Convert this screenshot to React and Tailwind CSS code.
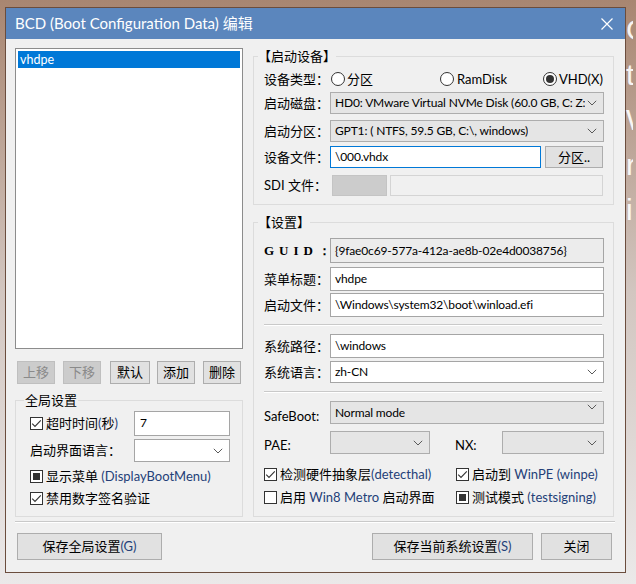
import React from 'react';

const Chevron = () => (
  <svg width="10" height="6" viewBox="0 0 10 6" className="shrink-0">
    <path d="M0.8 0.8 L5 5 L9.2 0.8" fill="none" stroke="#5a5a5a" strokeWidth="1" />
  </svg>
);

const CheckBox = ({ state }) => (
  <span className="w-[13px] h-[13px] border border-[#333333] bg-white flex items-center justify-center shrink-0">
    {state === 'on' && (
      <svg width="11" height="11" viewBox="0 0 11 11">
        <path d="M1.2 5.6 L4 8.4 L9.8 2.4" fill="none" stroke="#333333" strokeWidth="1.1" />
      </svg>
    )}
    {state === 'mixed' && <span className="w-[7px] h-[7px] bg-[#333333]" />}
  </span>
);

const Radio = ({ on }) => (
  <span className="w-[14px] h-[14px] rounded-full border border-[#333333] bg-white flex items-center justify-center shrink-0">
    {on && <span className="w-[8px] h-[8px] rounded-full bg-[#333333]" />}
  </span>
);

const Label = ({ children, className = '' }) => (
  <span className={`text-[13px] text-black leading-none whitespace-nowrap ${className}`}>{children}</span>
);

const TextBox = ({ value, className = '', gray = false, focus = false }) => (
  <div
    className={`border flex items-center pl-[4px] text-[12px] tracking-[-0.15px] text-black whitespace-nowrap overflow-hidden ${
      focus ? 'border-[#0078d7]' : 'border-[#a5a5a5]'
    } ${gray ? 'bg-[#ececec]' : 'bg-white'} ${className}`}
  >
    {value}
  </div>
);

const Combo = ({ value = '', className = '', white = false }) => (
  <div
    className={`border flex items-center justify-between pl-[4px] pr-[6px] text-[12px] tracking-[-0.15px] text-black whitespace-nowrap overflow-hidden ${
      white ? 'bg-white border-[#a5a5a5]' : 'bg-[#e5e5e5] border-[#adadad]'
    } ${className}`}
  >
    <span className="overflow-hidden">{value}</span>
    <Chevron />
  </div>
);

const Btn = ({ children, className = '', disabled = false }) => (
  <div
    className={`border flex items-center justify-center text-[13px] leading-none ${
      disabled ? 'bg-[#cccccc] border-[#bfbfbf] text-[#8a8a8a]' : 'bg-[#e1e1e1] border-[#adadad] text-black'
    } ${className}`}
  >
    {children}
  </div>
);

const Sep = ({ className = '' }) => (
  <div className={`h-[2px] border-t border-[#c9c9c9] bg-white ${className}`} />
);

const Row = ({ label, children, className = '' }) => (
  <div className={`flex items-center ${className}`}>
    <Label className="w-[66px]">{label}</Label>
    {children}
  </div>
);

const Blue = ({ children }) => <span className="text-[#243f78]">{children}</span>;

export default function App() {
  return (
    <div className="w-[636px] h-[584px] overflow-hidden flex bg-gradient-to-b from-[#a88671] via-[#d2c6c0] to-[#ebe9e9] pt-[7px] pl-[5px] font-['Lato','Noto_Sans_CJK_SC',sans-serif]">
      <div className="w-[621px] h-[566px] shrink-0 border border-[#6b4d3d] bg-[#f0f0f0] flex flex-col">
        {/* title bar */}
        <div className="h-[31px] shrink-0 bg-[#5b86bd] flex items-center justify-between pl-[9px] pr-[12px]">
          <span className="text-white text-[15px] leading-none">BCD (Boot Configuration Data) 编辑</span>
          <svg width="12" height="12" viewBox="0 0 12 12">
            <path d="M0.5 0.5 L11.5 11.5 M11.5 0.5 L0.5 11.5" stroke="#ffffff" strokeWidth="1.2" />
          </svg>
        </div>

        <div className="flex pl-[9px] pt-[9px]">
          {/* left column */}
          <div className="w-[228px] flex flex-col">
            <div className="h-[301px] border border-[#8c8c8c] bg-white p-[2px]">
              <div className="h-[17px] bg-[#0078d7] text-white text-[12.5px] leading-[17px] pl-[2px]">vhdpe</div>
            </div>
            <div className="flex mt-[12px] h-[23px]">
              <Btn disabled className="ml-[2px] w-[38px]">上移</Btn>
              <Btn disabled className="ml-[8px] w-[38px]">下移</Btn>
              <Btn className="ml-[9px] w-[40px]">默认</Btn>
              <Btn className="ml-[7px] w-[38px]">添加</Btn>
              <Btn className="ml-[8px] w-[38px]">删除</Btn>
            </div>
            <fieldset className="mt-[8px] h-[125px] border border-[#dcdcdc] pl-[14px] pr-[12px]">
              <legend className="-ml-[6px] px-[1px] text-[13px] leading-[16px] text-black">全局设置</legend>
              <div className="flex items-center justify-between mt-[3px]">
                <div className="flex items-center gap-[3px]">
                  <CheckBox state="on" />
                  <Label>
                    超时时间<Blue>(</Blue>秒<Blue>)</Blue>
                  </Label>
                </div>
                <TextBox value="7" className="w-[96px] h-[25px] items-start pt-[2px] pl-[5px]" />
              </div>
              <div className="flex items-center justify-between mt-[3px]">
                <Label>启动界面语言：</Label>
                <Combo white className="w-[96px] h-[23px]" />
              </div>
              <div className="flex items-center gap-[3px] mt-[8px]">
                <CheckBox state="mixed" />
                <Label>
                  显示菜单 <Blue>(DisplayBootMenu)</Blue>
                </Label>
              </div>
              <div className="flex items-center gap-[3px] mt-[9px]">
                <CheckBox state="on" />
                <Label>禁用数字签名验证</Label>
              </div>
            </fieldset>
          </div>

          {/* right column */}
          <div className="w-[361px] ml-[10px] flex flex-col">
            <fieldset className="h-[157px] border border-[#dcdcdc] pl-[10px] pr-[9px]">
              <legend className="-ml-[6px] text-[13px] leading-[16px] text-black">【启动设备】</legend>
              <div className="flex items-center mt-[6px] h-[18px]">
                <Label className="w-[67px]">设备类型：</Label>
                <div className="flex items-center gap-[2px] w-[109px]">
                  <Radio />
                  <Label>分区</Label>
                </div>
                <div className="flex items-center gap-[3px] w-[103px]">
                  <Radio />
                  <Label className="text-[12.5px]">RamDisk</Label>
                </div>
                <div className="flex items-center gap-[2px]">
                  <Radio on />
                  <Label className="text-[12.5px]">VHD(X)</Label>
                </div>
              </div>
              <Row label="启动磁盘：" className="mt-[4px]">
                <Combo className="w-[274px] h-[22px]" value="HD0: VMware Virtual NVMe Disk (60.0 GB, C: Z:" />
              </Row>
              <Row label="启动分区：" className="mt-[6px]">
                <Combo className="w-[274px] h-[22px]" value="GPT1: ( NTFS,  59.5 GB, C:\, windows)" />
              </Row>
              <Row label="设备文件：" className="mt-[4px]">
                <TextBox focus value="\000.vhdx" className="w-[211px] h-[22px]" />
                <Btn className="ml-[4px] w-[58px] h-[22px]">分区..</Btn>
              </Row>
              <div className="flex items-center mt-[6px] h-[22px]">
                <Label className="w-[68px] text-[12.5px]">SDI 文件：</Label>
                <div className="w-[55px] h-[21px] bg-[#cccccc] border border-[#c4c4c4]" />
                <div className="ml-[3px] w-[213px] h-[21px] bg-[#f0f0f0] border border-[#d4d4d4]" />
              </div>
            </fieldset>

            <fieldset className="mt-[9px] h-[303px] border border-[#dcdcdc] pl-[10px] pr-[9px]">
              <legend className="-ml-[6px] text-[13px] leading-[16px] text-black">【设置】</legend>
              <Row label={<span className="font-['Liberation_Serif',serif] font-bold tracking-[5px]">GUID：</span>} className="mt-[8px]">
                <TextBox gray value="{9fae0c69-577a-412a-ae8b-02e4d0038756}" className="w-[274px] h-[25px] text-[#333333]" />
              </Row>
              <Row label="菜单标题：" className="mt-[4px]">
                <TextBox value="vhdpe" className="w-[274px] h-[24px]" />
              </Row>
              <Row label="启动文件：" className="mt-[2px]">
                <TextBox value="\Windows\system32\boot\winload.efi" className="w-[274px] h-[24px]" />
              </Row>
              <Sep className="mt-[7px] w-[338px]" />
              <Row label="系统路径：" className="mt-[8px]">
                <TextBox value="\windows" className="w-[274px] h-[24px]" />
              </Row>
              <Row label="系统语言：" className="mt-[3px]">
                <Combo white value="zh-CN" className="w-[274px] h-[22px]" />
              </Row>
              <Sep className="mt-[8px] w-[338px]" />
              <div className="flex items-end mt-[8px]">
                <Label className="w-[66px] text-[12.5px] pb-[1px]">SafeBoot:</Label>
                <Combo value="Normal mode" className="w-[274px] h-[23px] items-start pt-[2px]" />
              </div>
              <div className="flex items-end mt-[7px]">
                <Label className="w-[66px] text-[12.5px] pb-[2px]">PAE:</Label>
                <Combo className="w-[100px] h-[23px]" />
                <Label className="ml-[25px] w-[47px] text-[12.5px] pb-[2px]">NX:</Label>
                <Combo className="w-[102px] h-[23px]" />
              </div>
              <div className="flex items-center mt-[14px]">
                <div className="flex items-center gap-[3px] w-[192px]">
                  <CheckBox state="on" />
                  <Label>
                    检测硬件抽象层<Blue>(detecthal)</Blue>
                  </Label>
                </div>
                <div className="flex items-center gap-[3px]">
                  <CheckBox state="on" />
                  <Label>
                    启动到 <Blue>WinPE (winpe)</Blue>
                  </Label>
                </div>
              </div>
              <div className="flex items-center mt-[10px]">
                <div className="flex items-center gap-[3px] w-[192px]">
                  <CheckBox state="off" />
                  <Label>
                    启用 <Blue>Win8 Metro</Blue> 启动界面
                  </Label>
                </div>
                <div className="flex items-center gap-[3px]">
                  <CheckBox state="mixed" />
                  <Label>
                    测试模式 <Blue>(testsigning)</Blue>
                  </Label>
                </div>
              </div>
            </fieldset>
          </div>
        </div>

        <Sep className="ml-[9px] mt-[4px] w-[600px]" />
        <div className="flex mt-[10px] h-[27px]">
          <Btn className="ml-[11px] w-[145px]">
            保存全局设置<Blue>(G)</Blue>
          </Btn>
          <Btn className="ml-[210px] w-[161px]">
            保存当前系统设置<Blue>(S)</Blue>
          </Btn>
          <Btn className="ml-[8px] w-[71px]">关闭</Btn>
        </div>
      </div>

      {/* wallpaper glimpses at right edge */}
      <div className="w-[10px] h-[240px] overflow-hidden flex flex-col text-white/90 text-[30px] leading-[45px] -ml-[3px] pl-[3px] font-['Liberation_Sans',sans-serif]">
        <span>G</span>
        <span>t</span>
        <span>W</span>
        <span>r</span>
        <span>i</span>
      </div>
    </div>
  );
}
